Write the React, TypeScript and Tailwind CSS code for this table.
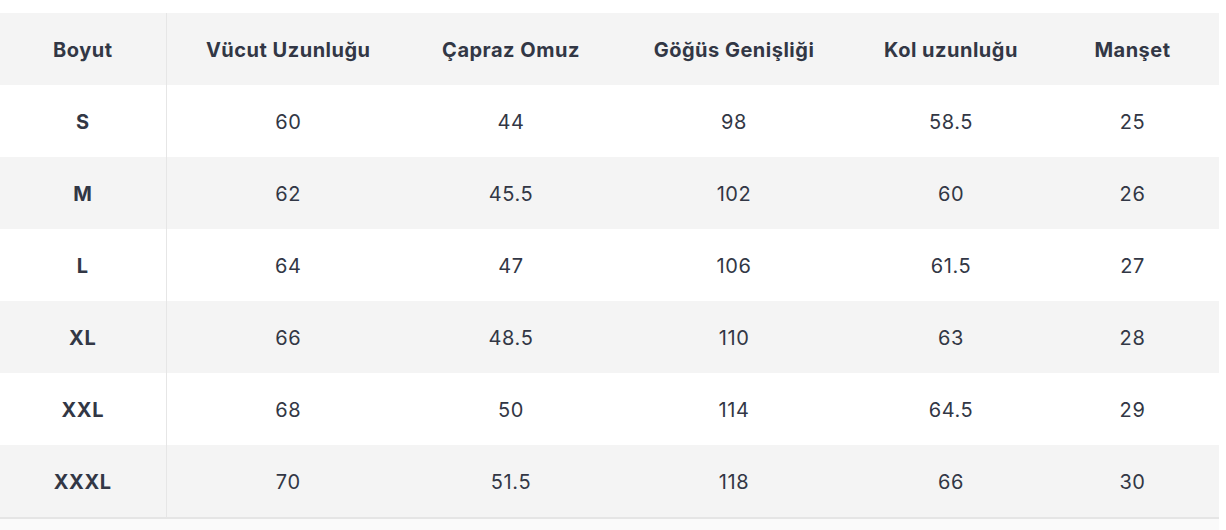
import React from "react";

const headers = ["Boyut", "Vücut Uzunluğu", "Çapraz Omuz", "Göğüs Genişliği", "Kol uzunluğu", "Manşet"];
const rows = [
  ["S", "60", "44", "98", "58.5", "25"],
  ["M", "62", "45.5", "102", "60", "26"],
  ["L", "64", "47", "106", "61.5", "27"],
  ["XL", "66", "48.5", "110", "63", "28"],
  ["XXL", "68", "50", "114", "64.5", "29"],
  ["XXXL", "70", "51.5", "118", "66", "30"],
];
const widths = ["w-[166px]", "w-[244px]", "w-[202px]", "w-[244px]", "w-[190px]", "w-[173px]"];

export default function App() {
  return (
    <div className="w-[1226px] h-[530px] bg-white pt-[13px] text-[#323745] [font-family:Inter,'Noto_Sans',sans-serif]">
      <div className="w-[1219px] bg-[#fafafa]">
        <table className="w-[1219px] table-fixed border-collapse">
          <colgroup>
            {widths.map((w, i) => (
              <col key={i} className={w} />
            ))}
          </colgroup>
          <thead>
            <tr className="h-[72px] bg-[#f4f4f4]">
              {headers.map((h, i) => (
                <th
                  key={h}
                  className={`p-0 pt-[2px] text-center text-[20px] font-bold tracking-[0.5px] ${i === 0 ? "border-r border-[#e6e6e6]" : ""}`}
                >
                  {h}
                </th>
              ))}
            </tr>
          </thead>
          <tbody>
            {rows.map((r, ri) => (
              <tr key={r[0]} className={`h-[72px] ${ri % 2 === 0 ? "bg-white" : "bg-[#f4f4f4]"}`}>
                {r.map((c, ci) => (
                  <td
                    key={ci}
                    className={`p-0 pt-[2px] text-center text-[20px] tracking-[0.6px] ${ci === 0 ? "font-bold border-r border-[#e6e6e6]" : "font-normal"}`}
                  >
                    {c}
                  </td>
                ))}
              </tr>
            ))}
          </tbody>
        </table>
        <div className="h-[13px] border-t-2 border-[#e5e5e5] bg-[#fafafa]" />
      </div>
    </div>
  );
}
